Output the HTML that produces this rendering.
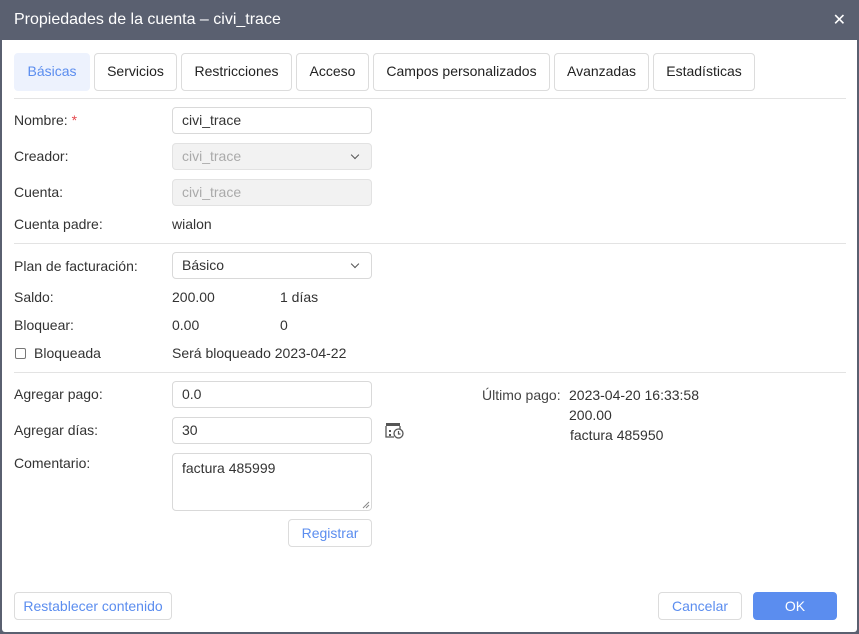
<!DOCTYPE html>
<html><head><meta charset="utf-8"><style>
*{box-sizing:border-box;margin:0;padding:0}
body{width:859px;height:634px;background:#5a6070;font-family:"Liberation Sans",sans-serif;font-size:14px;color:#333;position:relative;overflow:hidden}
.dlg{position:absolute;left:2px;top:40px;width:855px;height:592px;background:#fff;border-radius:0 0 3px 3px}
.t{position:absolute;white-space:nowrap}
.title{left:14px;top:11px;color:#fff;font-size:16px}
.x{right:13px;top:10px;color:#fff;font-size:16px}
.tab{position:absolute;top:53px;height:38px;border:1px solid #dcdcdc;border-radius:4px;background:#fff;color:#222;font-size:14px;text-align:center;line-height:35px}
.tab.a{background:#edf2fd;border-color:#edf2fd;color:#5b8def}
.hr{position:absolute;left:14px;right:13px;height:1px;background:#e3e3e3}
.inp{position:absolute;left:172px;width:200px;height:27px;border:1px solid #d9d9d9;border-radius:4px;padding-left:9px;line-height:25px;color:#333}
.dis{background:#f2f2f2;color:#aaa;border-color:#e2e2e2}
.chev{position:absolute;right:13px;top:8px;width:6px;height:6px;border-right:1.5px solid #555;border-bottom:1.5px solid #555;transform:rotate(45deg)}
.btn{position:absolute;height:28px;border:1px solid #dcdcdc;border-radius:4px;background:#fff;color:#5b8def;text-align:center;line-height:26px}
</style></head><body>
<div class="t title">Propiedades de la cuenta – civi_trace</div>
<div class="t x">✕</div>
<div class="dlg" style="z-index:-1"></div>
<div class="tab a" style="left:14px;width:76px">Básicas</div>
<div class="tab" style="left:94px;width:83px">Servicios</div>
<div class="tab" style="left:181px;width:111px">Restricciones</div>
<div class="tab" style="left:296px;width:73px">Acceso</div>
<div class="tab" style="left:373px;width:177px">Campos personalizados</div>
<div class="tab" style="left:554px;width:95px">Avanzadas</div>
<div class="tab" style="left:653px;width:102px">Estadísticas</div>
<div class="hr" style="top:98px"></div>
<div class="t" style="left:14px;top:112px">Nombre: <span style="color:#e5484d">*</span></div>
<div class="inp" style="top:107px">civi_trace</div>
<div class="t" style="left:14px;top:148px">Creador:</div>
<div class="inp dis" style="top:143px">civi_trace<span class="chev"></span></div>
<div class="t" style="left:14px;top:184px">Cuenta:</div>
<div class="inp dis" style="top:179px">civi_trace</div>
<div class="t" style="left:14px;top:216px">Cuenta padre:</div>
<div class="t" style="left:172px;top:216px">wialon</div>
<div class="hr" style="top:243px"></div>
<div class="t" style="left:14px;top:258px">Plan de facturación:</div>
<div class="inp" style="top:252px">Básico<span class="chev"></span></div>
<div class="t" style="left:14px;top:289px">Saldo:</div>
<div class="t" style="left:172px;top:289px">200.00</div>
<div class="t" style="left:280px;top:289px">1 días</div>
<div class="t" style="left:14px;top:317px">Bloquear:</div>
<div class="t" style="left:172px;top:317px">0.00</div>
<div class="t" style="left:280px;top:317px">0</div>
<div style="position:absolute;left:15px;top:348px;width:11px;height:11px;border:1px solid #777;border-radius:2px"></div>
<div class="t" style="left:34px;top:345px">Bloqueada</div>
<div class="t" style="left:172px;top:345px">Será bloqueado 2023-04-22</div>
<div class="hr" style="top:372px"></div>
<div class="t" style="left:14px;top:386px">Agregar pago:</div>
<div class="inp" style="top:381px">0.0</div>
<div class="t" style="left:14px;top:422px">Agregar días:</div>
<div class="inp" style="top:417px">30</div>
<svg style="position:absolute;left:385px;top:422px" width="20" height="18" viewBox="0 0 20 18"><rect x="1" y="1" width="14" height="3" fill="#555"/><path d="M1 4v11h8M15 4v3" stroke="#555" stroke-width="1.3" fill="none"/><rect x="4" y="8" width="2" height="2" fill="#555"/><rect x="4" y="12" width="2" height="2" fill="#555"/><circle cx="13.5" cy="11.5" r="4.5" fill="#fff" stroke="#555" stroke-width="1.3"/><path d="M13.5 9v3h2" stroke="#555" stroke-width="1.2" fill="none"/></svg>
<div class="t" style="left:14px;top:455px">Comentario:</div>
<div class="inp" style="top:453px;height:58px;padding-top:4px;line-height:20px">factura 485999</div>
<svg style="position:absolute;left:362px;top:501px" width="8" height="8" viewBox="0 0 8 8"><path d="M7 1L1 7M7 4L4 7" stroke="#888" stroke-width="1"/></svg>
<div class="btn" style="left:288px;top:519px;width:84px">Registrar</div>
<div class="t" style="left:482px;top:387px;color:#444">Último pago:</div>
<div class="t" style="left:569px;top:387px">2023-04-20 16:33:58</div>
<div class="t" style="left:569px;top:407px">200.00</div>
<div class="t" style="left:570px;top:427px">factura 485950</div>
<div class="btn" style="left:14px;top:592px;width:158px">Restablecer contenido</div>
<div class="btn" style="left:658px;top:592px;width:84px">Cancelar</div>
<div class="btn" style="left:753px;top:592px;width:84px;background:#5b8def;border-color:#5b8def;color:#fff">OK</div>
</body></html>
